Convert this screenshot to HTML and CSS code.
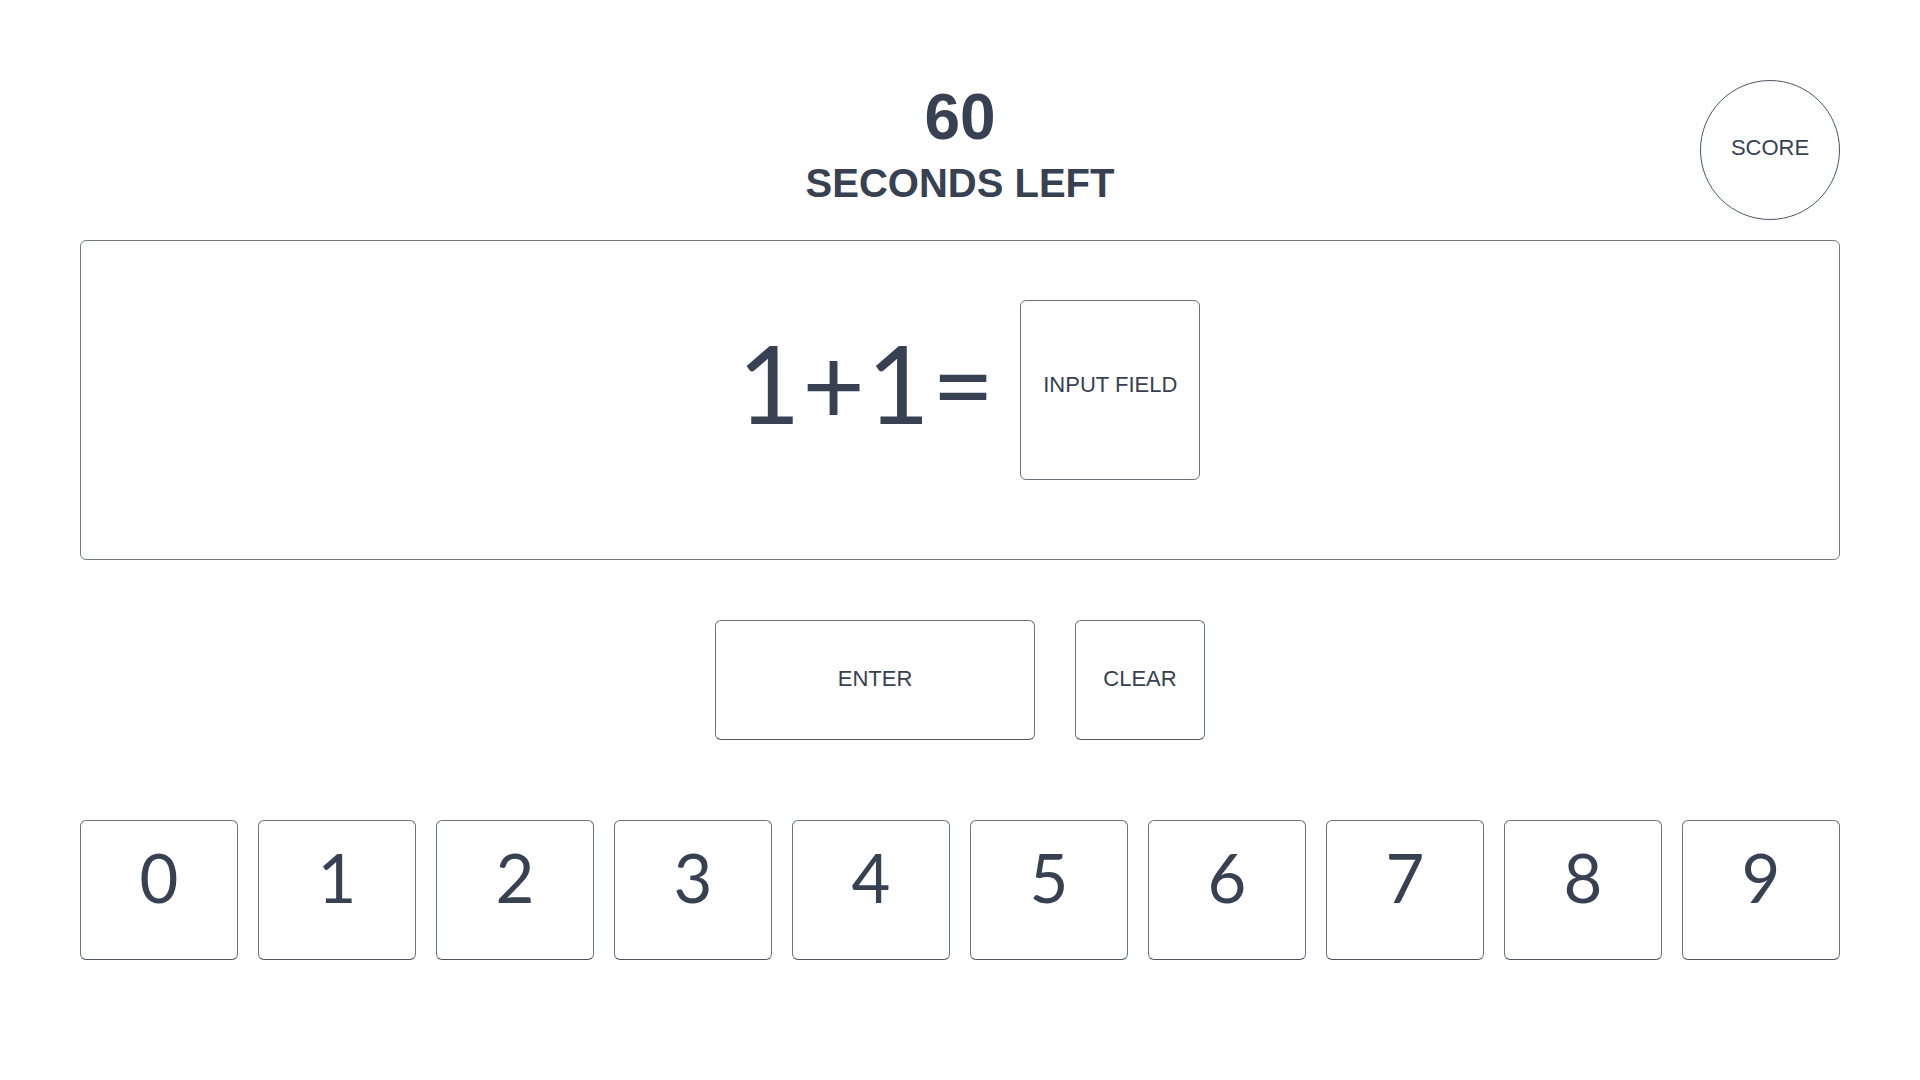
FILE: index.html
```html
<!DOCTYPE html>
<html lang="en">
<head>
<meta charset="utf-8">
<title>Math Game</title>
<link rel="stylesheet" href="styles.css">
</head>
<body>
<div class="page">
  <header class="header">
    <div class="title">
      <div class="count">60</div>
      <div class="label">SECONDS LEFT</div>
    </div>
    <div class="score">SCORE</div>
  </header>

  <section class="board">
    <div class="equation">1+1=</div>
    <div class="input">INPUT FIELD</div>
  </section>

  <div class="actions">
    <button class="btn enter">ENTER</button>
    <button class="btn clear">CLEAR</button>
  </div>

  <div class="keys">
    <button class="key">0</button>
    <button class="key">1</button>
    <button class="key">2</button>
    <button class="key">3</button>
    <button class="key">4</button>
    <button class="key">5</button>
    <button class="key">6</button>
    <button class="key">7</button>
    <button class="key">8</button>
    <button class="key">9</button>
  </div>
</div>
</body>
</html>
```

FILE: styles.css
```css
* { box-sizing: border-box; }

html, body {
  margin: 0;
  background: #ffffff;
}

body {
  font-family: "Liberation Sans", Arial, sans-serif;
  color: #374151;
}

.page {
  padding: 80px 80px 0;
}

.header {
  display: grid;
  grid-template-columns: 1fr auto 1fr;
  height: 140px;
}

.title {
  grid-column: 2;
  text-align: center;
  font-weight: 700;
  padding-top: 5px;
}

.count {
  font-size: 64px;
  line-height: 1;
}

.label {
  font-size: 40px;
  line-height: 1;
  margin-top: 14px;
}

.score {
  grid-column: 3;
  justify-self: end;
  width: 140px;
  height: 140px;
  border: 1px solid #4b5563;
  border-radius: 50%;
  display: flex;
  align-items: center;
  justify-content: center;
  font-size: 22px;
  padding-bottom: 4px;
}

.board {
  margin-top: 20px;
  height: 320px;
  border: 1px solid #747982;
  border-radius: 6px;
  display: flex;
  justify-content: center;
  align-items: flex-start;
  gap: 24px;
  padding: 59px 0 0 18px;
}

.equation {
  font-family: Lato, "Liberation Sans", sans-serif;
  font-size: 108px;
  line-height: 1;
  letter-spacing: 2px;
  margin-top: 28px;
}

.input {
  width: 180px;
  height: 180px;
  border: 1px solid #6b7280;
  border-radius: 6px;
  display: flex;
  align-items: center;
  justify-content: center;
  font-size: 22px;
  padding-bottom: 11px;
}

.actions {
  margin-top: 60px;
  display: flex;
  justify-content: center;
  gap: 40px;
}

.btn, .key {
  color: #374151;
  background: #ffffff;
  border: 1px solid #6b7280;
  border-bottom-color: #4b5563;
  border-radius: 6px;
  padding: 0;
  display: flex;
  align-items: center;
  justify-content: center;
}

.btn {
  height: 120px;
  font-family: "Liberation Sans", Arial, sans-serif;
  font-size: 22px;
  padding-bottom: 2px;
}

.enter { width: 320px; }
.clear { width: 130px; }

.keys {
  margin-top: 80px;
  display: grid;
  grid-template-columns: repeat(10, 1fr);
  gap: 20px;
}

.key {
  height: 140px;
  font-family: Lato, "Liberation Sans", sans-serif;
  font-size: 67px;
  line-height: 1;
  padding-bottom: 26px;
}
```
